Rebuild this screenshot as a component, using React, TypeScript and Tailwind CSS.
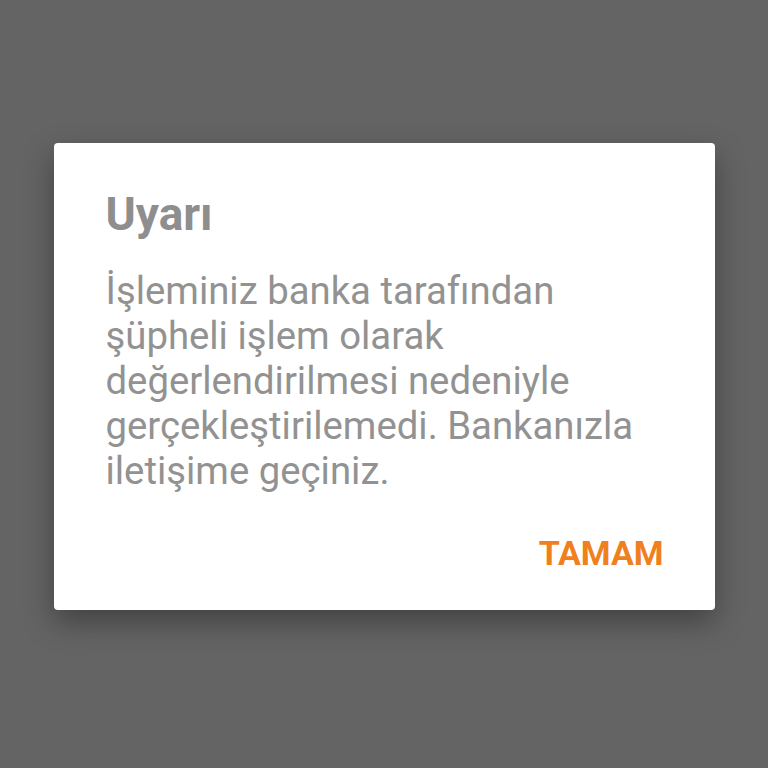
export default function App() {
  return (
    <div
      className="flex h-[768px] w-[768px] items-start justify-center bg-[#646464] pt-[143px]"
      style={{ fontFamily: "Roboto, 'Noto Sans', sans-serif" }}
    >
      <div className="flex h-[467px] w-[661px] flex-col rounded-[4px] bg-white pl-[52px] pr-[51px] pt-[47px] shadow-[0_12px_30px_rgba(0,0,0,0.35)]">
        <h1 className="text-[46px] font-bold leading-[48px] text-[#8e8e8e]">Uyarı</h1>
        <p className="mt-[30px] text-[38.3px] leading-[45px] text-[#929292]">
          İşleminiz banka tarafından şüpheli işlem olarak değerlendirilmesi nedeniyle
          gerçekleştirilemedi. Bankanızla iletişime geçiniz.
        </p>
        <div className="mt-[40px] flex justify-end">
          <button className="text-[34px] font-bold leading-[40px] text-[#f07f1e]">TAMAM</button>
        </div>
      </div>
    </div>
  );
}
